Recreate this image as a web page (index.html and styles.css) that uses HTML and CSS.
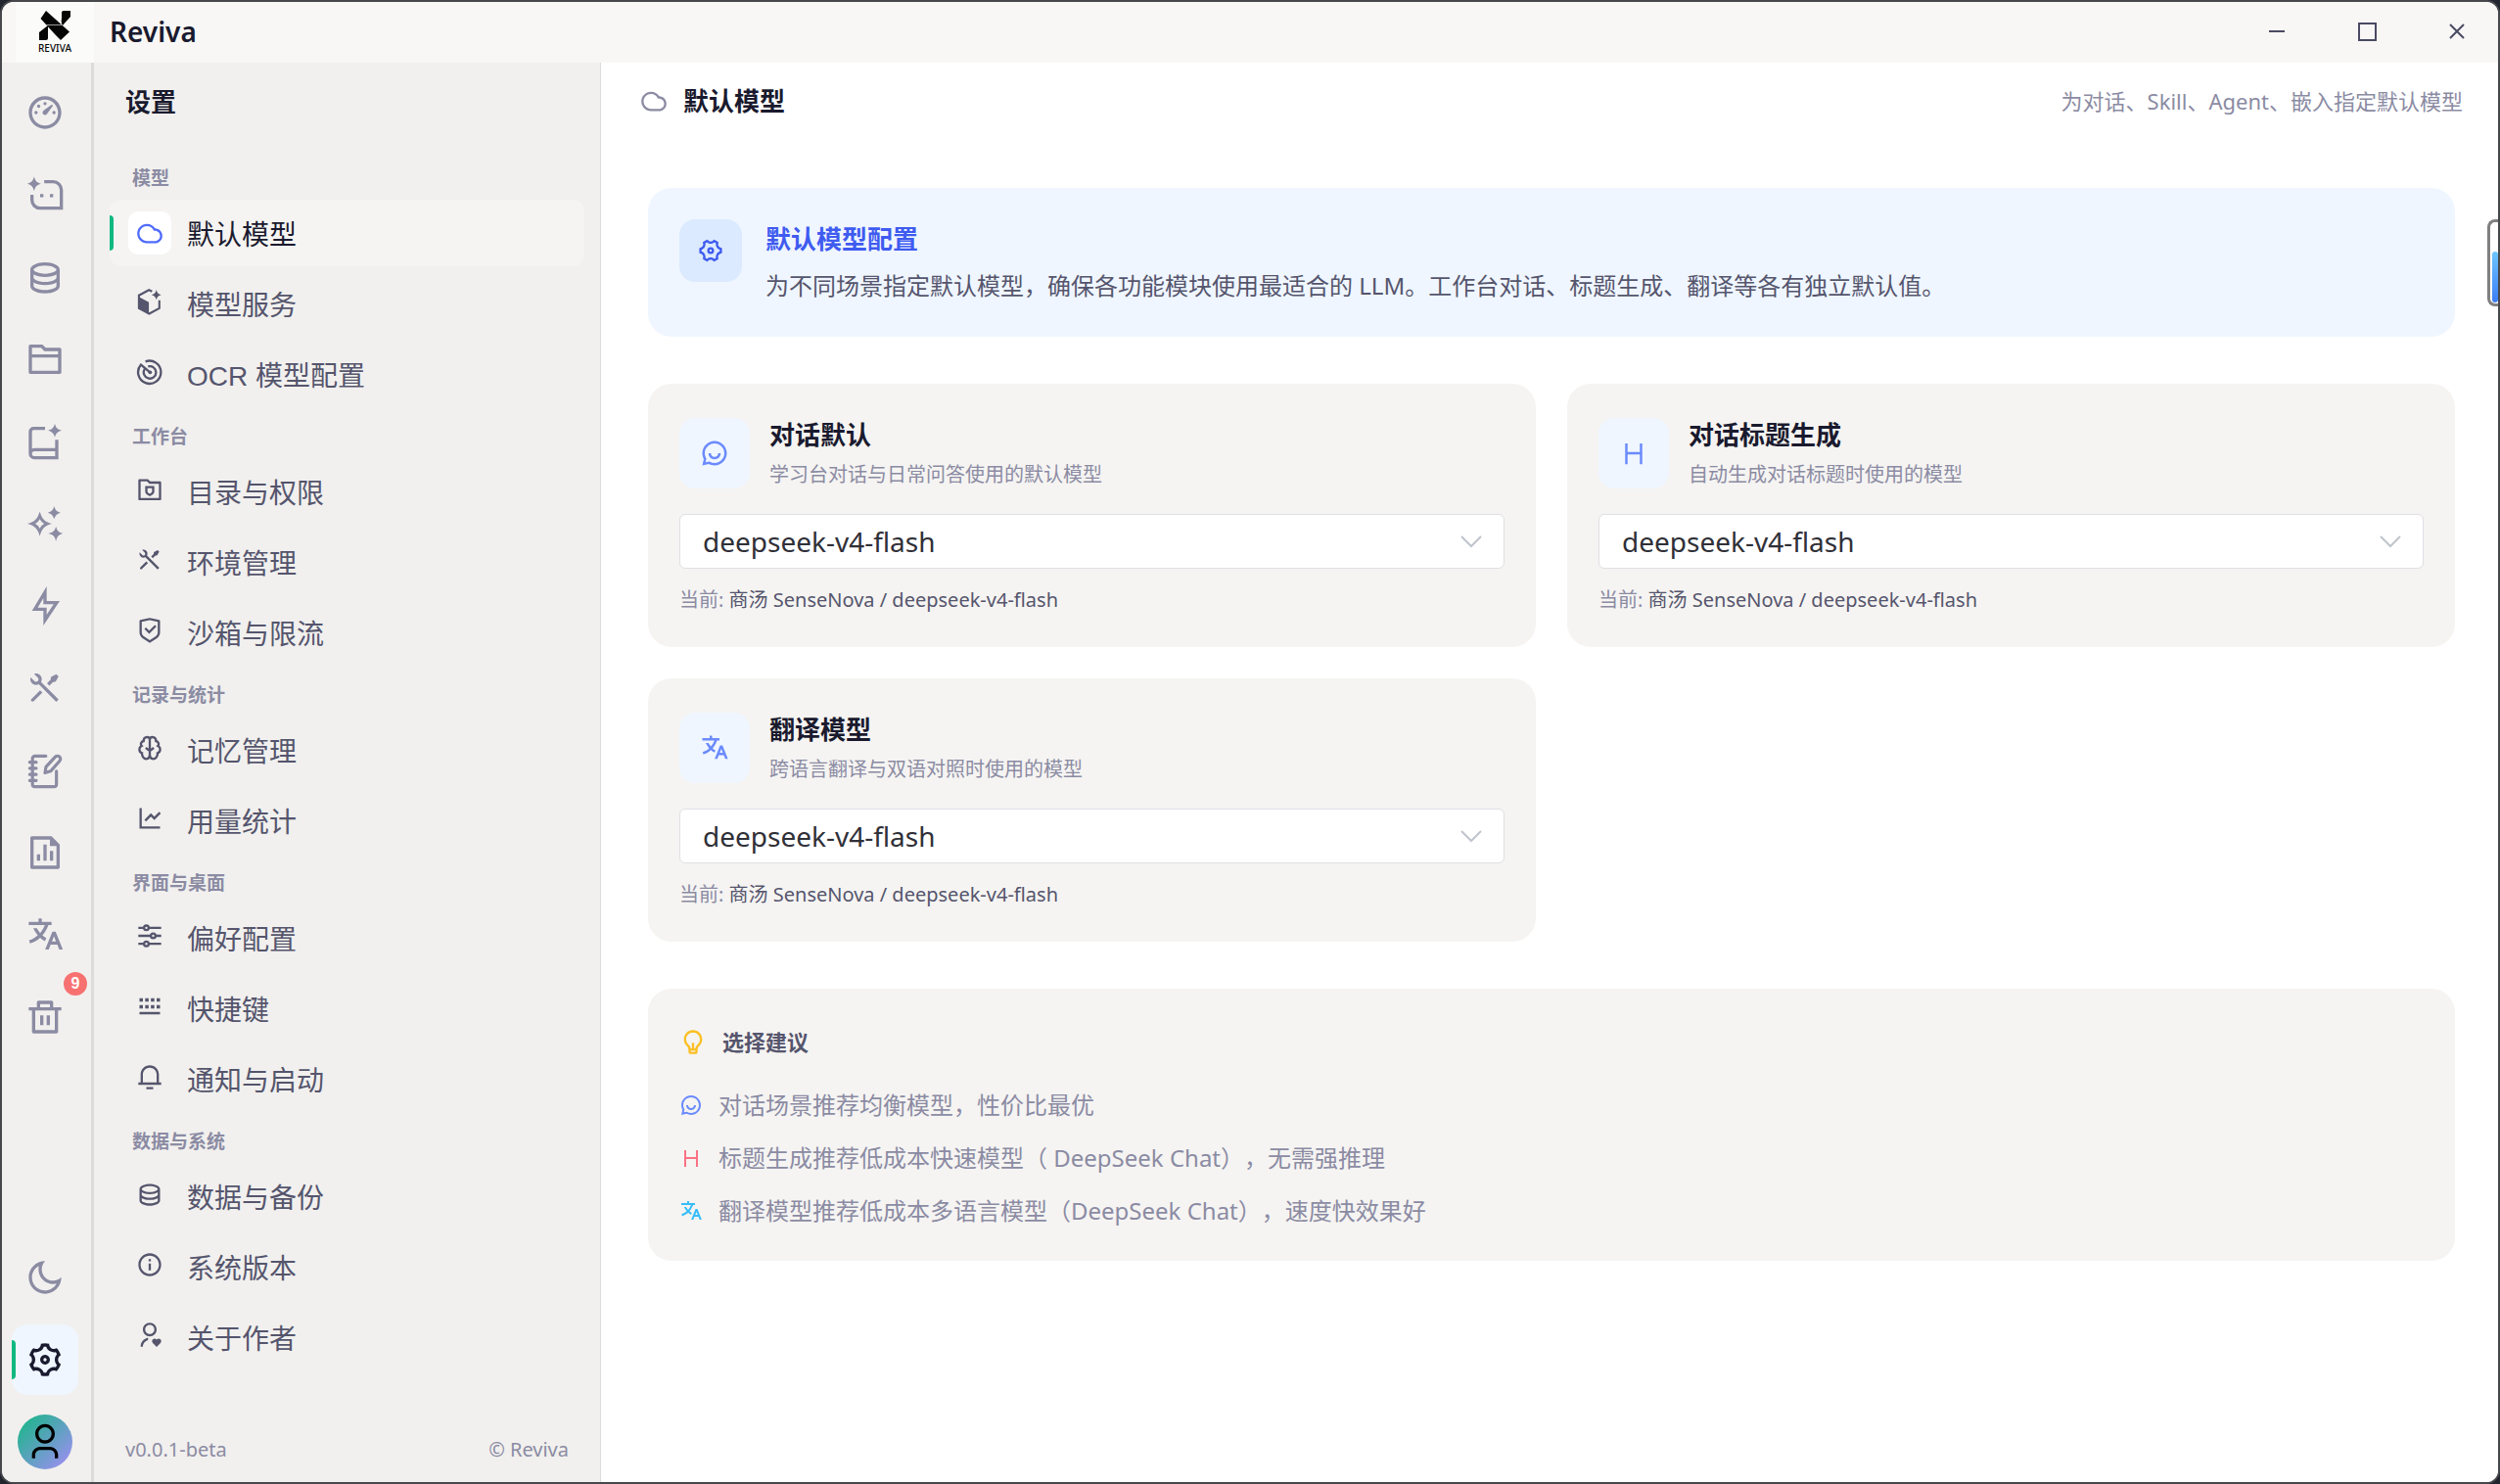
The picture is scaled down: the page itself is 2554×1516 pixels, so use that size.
FILE: index.html
```html
<!DOCTYPE html>
<html lang="zh-CN">
<head>
<meta charset="utf-8">
<meta name="viewport" content="width=device-width, initial-scale=1">
<title>Reviva</title>
<link rel="stylesheet" href="styles.css">
</head>
<body>
<svg class="sprite" aria-hidden="true">
  <symbol id="i-cloud" viewBox="0 0 24 24"><path d="M9.5 6C5.91 6 3 8.91 3 12.5C3 16.09 5.91 19 9.5 19H16.5C18.985 19 21 16.985 21 14.5C21 12.015 18.985 10 16.5 10C16.172 10 15.852 10.035 15.543 10.102C14.589 7.699 12.243 6 9.5 6ZM16.5 21H9.5C4.806 21 1 17.194 1 12.5C1 7.806 4.806 4 9.5 4C12.543 4 15.213 5.599 16.715 8.003C20.205 8.117 23 10.982 23 14.5C23 18.09 20.09 21 16.5 21Z"/></symbol>
  <symbol id="i-dash" viewBox="0 0 24 24"><path d="M12 2C17.523 2 22 6.477 22 12C22 17.523 17.523 22 12 22C6.477 22 2 17.523 2 12C2 6.477 6.477 2 12 2ZM12 4C7.582 4 4 7.582 4 12C4 16.418 7.582 20 12 20C16.418 20 20 16.418 20 12C20 7.582 16.418 4 12 4ZM15.833 7.337C16.07 7.171 16.392 7.199 16.596 7.404C16.8 7.608 16.827 7.93 16.659 8.164C14.479 11.21 13.28 12.842 13.061 13.061C12.475 13.646 11.525 13.646 10.939 13.061C10.354 12.475 10.354 11.525 10.939 10.939C11.313 10.566 12.944 9.365 15.833 7.337Z"/><circle cx="17.5" cy="12" r="1"/><circle cx="6.5" cy="12" r="1"/><circle cx="8.1" cy="8.1" r="1"/><circle cx="12" cy="6.5" r="1"/></symbol>
  <symbol id="i-chatai" viewBox="0 0 24 24"><path d="M11.5 4H17a5 5 0 0 1 5 5V20.2H9a5 5 0 0 1-5-5V12" fill="none" stroke="currentColor" stroke-width="2"/><path d="M5.3 .8C5.9 3.400 6.900 4.600 9.500 5.200C6.900 5.900 5.900 7 5.300 9.800C4.700 7 3.700 5.900 1.100 5.200C3.700 4.600 4.700 3.400 5.300 .8ZM9 11.500h2v2H9zM15 11.500h2v2h-2z"/></symbol>
  <symbol id="i-db" viewBox="0 0 24 24"><path d="M5 12.5C5 12.813 5.461 13.358 6.53 13.893C7.914 14.585 9.877 15 12 15C14.123 15 16.086 14.585 17.47 13.893C18.539 13.358 19 12.813 19 12.5V10.329C17.35 11.348 14.827 12 12 12C9.173 12 6.65 11.348 5 10.329V12.5ZM19 15.329C17.35 16.348 14.827 17 12 17C9.173 17 6.65 16.348 5 15.329V17.5C5 17.813 5.461 18.358 6.53 18.893C7.914 19.585 9.877 20 12 20C14.123 20 16.086 19.585 17.47 18.893C18.539 18.358 19 17.813 19 17.5V15.329ZM3 17.5V7.5C3 5.015 7.029 3 12 3C16.971 3 21 5.015 21 7.5V17.5C21 19.985 16.971 22 12 22C7.029 22 3 19.985 3 17.5ZM12 10C14.123 10 16.086 9.585 17.47 8.893C18.539 8.358 19 7.813 19 7.5C19 7.187 18.539 6.642 17.47 6.107C16.086 5.415 14.123 5 12 5C9.877 5 7.914 5.415 6.53 6.107C5.461 6.642 5 7.187 5 7.5C5 7.813 5.461 8.358 6.53 8.893C7.914 9.585 9.877 10 12 10Z"/></symbol>
  <symbol id="i-folder" viewBox="0 0 24 24"><path d="M12.414 5H21C21.552 5 22 5.448 22 6V20C22 20.552 21.552 21 21 21H3C2.448 21 2 20.552 2 20V4C2 3.448 2.448 3 3 3H10.414L12.414 5ZM20 11H4V19H20V11ZM20 9V7H11.586L9.586 5H4V9H20Z"/></symbol>
  <symbol id="i-book" viewBox="0 0 24 24"><path d="M12 4H5a2 2 0 0 0-2 2V19.500M19.200 11V22H5.500a2.400 2.400 0 0 1 0-5H19.200" fill="none" stroke="currentColor" stroke-width="2"/><path d="M18 1C18.600 3.500 19.700 4.600 22.200 5.200C19.700 5.900 18.600 7 18 9.400C17.400 7 16.300 5.900 13.800 5.200C16.300 4.600 17.400 3.500 18 1Z"/></symbol>
  <symbol id="i-sparkle" viewBox="0 0 24 24"><path fill-rule="evenodd" d="M8.800 4.500C10 9 11.700 10.800 16.200 12C11.700 13.300 10 15.100 8.800 19.600C7.500 15.100 5.700 13.300 1.200 12C5.700 10.800 7.500 9 8.800 4.500ZM8.800 9.200C8 10.700 7.300 11.300 6 12C7.300 12.800 8 13.500 8.800 15C9.500 13.500 10.200 12.800 11.500 12C10.200 11.300 9.500 10.700 8.800 9.200ZM17.600 1.200C18.200 3.600 19.300 4.700 21.500 5.200C19.300 5.800 18.200 6.900 17.600 9.200C17 6.900 15.900 5.800 13.700 5.200C15.900 4.700 17 3.600 17.600 1.200ZM18.700 13.600C19.300 16.200 20.400 17.300 23 18C20.400 18.700 19.300 19.800 18.700 22.800C18.100 19.800 17 18.700 14 18C17 17.300 18.100 16.200 18.700 13.600Z"/></symbol>
  <symbol id="i-bolt" viewBox="0 0 24 24"><path d="M13 9H21L11 24V15H4L13 0V9ZM11 11V7.221L7.532 13H13V17.394L17.263 11H11Z"/></symbol>
  <symbol id="i-tools" viewBox="0 0 24 24"><path d="M5.329 3.272C6.563 2.833 7.992 3.107 8.979 4.094C10.1 5.215 10.302 6.907 9.584 8.234L20.293 18.944L18.879 20.358L8.17 9.649C6.843 10.367 5.151 10.165 4.03 9.044C3.042 8.057 2.768 6.627 3.207 5.393L5.444 7.63C6.03 8.216 6.979 8.216 7.565 7.63C8.151 7.044 8.151 6.094 7.565 5.509L5.329 3.272ZM15.697 5.155L18.879 3.387L20.293 4.802L18.525 7.984L16.757 8.337L14.636 10.458L13.222 9.044L15.343 6.923L15.697 5.155ZM8.979 13.287L10.394 14.701L5.09 20.004C4.7 20.395 4.066 20.395 3.676 20.004C3.313 19.642 3.287 19.07 3.598 18.677L8.979 13.287Z"/></symbol>
  <symbol id="i-note" viewBox="0 0 24 24"><path d="M12.500 3.200H5.800a1.500 1.500 0 0 0-1.500 1.500V20.500a1.500 1.500 0 0 0 1.500 1.500H17.500a1.500 1.500 0 0 0 1.500-1.500V12.500M2.600 7H6.600M2.600 10.700H6.600M2.600 14.500H6.600M2.600 18.200H6.600M12 13.500L12.600 9.800L18.300 3.700A1.700 1.700 0 0 1 20.900 6.300L15.400 12.500Z" fill="none" stroke="currentColor" stroke-width="1.900" stroke-linecap="round" stroke-linejoin="round"/></symbol>
  <symbol id="i-filechart" viewBox="0 0 24 24"><path d="M11 7H13V17H11V7ZM15 11H17V17H15V11ZM7 13H9V17H7V13ZM15 4H5V20H19V8H15V4ZM3 2.992C3 2.444 3.447 2 3.999 2H16L21 7L21 20.993C21 21.549 20.555 22 20.007 22H3.993C3.445 22 3 21.545 3 21.008V2.992Z"/></symbol>
  <symbol id="i-translate" viewBox="0 0 24 24"><path d="M18.5 10L22.9 21H20.745L19.544 18H15.454L14.255 21H12.101L16.5 10H18.5ZM10 2V4H16V6L14.032 6.001C13.243 8.366 11.999 10.506 10.412 12.301C11.134 12.946 11.917 13.518 12.748 14.008L11.997 15.886C10.924 15.278 9.919 14.552 9 13.725C7.214 15.332 5.109 16.555 2.799 17.273L2.263 15.344C4.239 14.72 6.045 13.674 7.59 12.302C6.463 11.016 5.509 9.58 4.767 8L7.007 8C7.57 9.039 8.24 10.003 9 10.877C10.228 9.465 11.221 7.816 11.91 6.001L2 6V4H8V2H10ZM17.5 12.885L16.253 16H18.745L17.5 12.885Z"/></symbol>
  <symbol id="i-trash" viewBox="0 0 24 24"><path d="M17 6H22V8H20V21C20 21.552 19.552 22 19 22H5C4.448 22 4 21.552 4 21V8H2V6H7V3C7 2.448 7.448 2 8 2H16C16.552 2 17 2.448 17 3V6ZM18 8H6V20H18V8ZM9 11H11V17H9V11ZM13 11H15V17H13V11ZM9 4V6H15V4H9Z"/></symbol>
  <symbol id="i-moon" viewBox="0 0 24 24"><path d="M10 7C10 10.866 13.134 14 17 14C18.958 14 20.729 13.196 22 11.9C22 11.933 22 11.967 22 12C22 17.523 17.523 22 12 22C6.477 22 2 17.523 2 12C2 6.477 6.477 2 12 2C12.034 2 12.067 2 12.101 2C10.804 3.271 10 5.042 10 7ZM4 12C4 16.418 7.582 20 12 20C15.058 20 17.716 18.284 19.062 15.762C18.395 15.919 17.704 16 17 16C12.029 16 8 11.971 8 7C8 6.296 8.081 5.605 8.238 4.938C5.716 6.284 4 8.942 4 12Z"/></symbol>
  <symbol id="i-gear" viewBox="0 0 24 24"><path fill-rule="evenodd" d="M2 12C2 11.135 2.11 10.296 2.316 9.496C3.406 9.553 4.488 9.01 5.072 8C5.655 6.99 5.584 5.783 4.991 4.867C6.184 3.695 7.668 2.82 9.326 2.361C9.822 3.334 10.833 4 12 4C13.167 4 14.178 3.334 14.674 2.361C16.332 2.82 17.817 3.695 19.009 4.867C18.416 5.783 18.345 6.99 18.928 8C19.512 9.01 20.594 9.553 21.684 9.496C21.89 10.296 22 11.135 22 12C22 12.864 21.89 13.703 21.684 14.503C20.594 14.447 19.512 14.99 18.928 16C18.345 17.009 18.416 18.217 19.009 19.133C17.817 20.304 16.332 21.179 14.674 21.638C14.178 20.666 13.167 20 12 20C10.833 20 9.822 20.666 9.326 21.638C7.668 21.179 6.184 20.304 4.991 19.133C5.584 18.217 5.655 17.009 5.072 16C4.488 14.99 3.406 14.447 2.316 14.503C2.11 13.703 2 12.864 2 12ZM6.804 15C7.434 16.091 7.615 17.346 7.368 18.524C7.776 18.814 8.21 19.065 8.665 19.274C9.562 18.471 10.739 18 12 18C13.261 18 14.438 18.471 15.335 19.274C15.79 19.065 16.224 18.814 16.632 18.524C16.385 17.346 16.566 16.091 17.196 15C17.826 13.909 18.823 13.125 19.966 12.749C19.988 12.502 20 12.252 20 12C20 11.748 19.988 11.498 19.966 11.25C18.823 10.875 17.826 10.091 17.196 9C16.566 7.908 16.385 6.654 16.632 5.476C16.224 5.186 15.79 4.935 15.335 4.726C14.438 5.528 13.261 6 12 6C10.739 6 9.562 5.528 8.665 4.726C8.21 4.935 7.776 5.186 7.368 5.476C7.615 6.654 7.434 7.908 6.804 9C6.174 10.091 5.177 10.875 4.034 11.25C4.012 11.498 4 11.748 4 12C4 12.252 4.012 12.502 4.034 12.749C5.177 13.125 6.174 13.909 6.804 15ZM12 15A3 3 0 1 1 12 9A3 3 0 0 1 12 15ZM12 13A1 1 0 1 0 12 11A1 1 0 0 0 12 13Z"/></symbol>
  <symbol id="i-user" viewBox="0 0 24 24"><path d="M20 22H18V20C18 18.343 16.657 17 15 17H9C7.343 17 6 18.343 6 20V22H4V20C4 17.239 6.239 15 9 15H15C17.761 15 20 17.239 20 20V22ZM12 13C8.686 13 6 10.314 6 7C6 3.686 8.686 1 12 1C15.314 1 18 3.686 18 7C18 10.314 15.314 13 12 13ZM12 11C14.209 11 16 9.209 16 7C16 4.791 14.209 3 12 3C9.791 3 8 4.791 8 7C8 9.209 9.791 11 12 11Z"/></symbol>
  <symbol id="i-box" viewBox="0 0 24 24"><path d="M14 3.200L11.300 1.900L2.500 6.600V17.900L11.500 22.700L20.400 17.900V11" fill="none" stroke="currentColor" stroke-width="1.800"/><path d="M1.700 7.600L11.200 12.700V22.600L1.700 18ZM17.800 1.800C18.300 4.500 19.400 5.600 22 6.200C19.400 6.900 18.300 8 17.800 10.600C17.200 8 16.100 6.900 13.500 6.200C16.100 5.600 17.200 4.500 17.800 1.800Z"/></symbol>
  <symbol id="i-radar" viewBox="0 0 24 24"><path d="M8.200 2.900A10 10 0 1 1 4.300 5.600L12.500 12.500M10.500 7.200A5.400 5.400 0 1 1 7.500 9.500" fill="none" stroke="currentColor" stroke-width="2"/><circle cx="12.300" cy="12.300" r="1.600"/></symbol>
  <symbol id="i-foldershield" viewBox="0 0 24 24"><path d="M12.414 5H21C21.552 5 22 5.448 22 6V20.500C22 21 21.552 21.500 21 21.500H3C2.448 21.500 2 21 2 20.500V4C2 3.448 2.448 3 3 3H10.414L12.414 5ZM4 5V19.500H20V7H11.586L9.586 5H4ZM8 9H16V14C16 15.600 14.800 16.800 12 18C9.200 16.800 8 15.600 8 14V9ZM10 11V14C10 14.600 10.700 15.200 12 15.900C13.300 15.200 14 14.600 14 14V11H10Z"/></symbol>
  <symbol id="i-shield" viewBox="0 0 24 24"><path d="M12 1L20.217 2.826C20.674 2.928 21 3.333 21 3.802V13.789C21 15.795 19.997 17.669 18.328 18.781L12 23L5.672 18.781C4.003 17.669 3 15.795 3 13.789V3.802C3 3.333 3.326 2.928 3.783 2.826L12 1ZM12 3.049L5 4.604V13.789C5 15.127 5.668 16.375 6.781 17.117L12 20.597L17.219 17.117C18.332 16.375 19 15.127 19 13.789V4.604L12 3.049ZM16.452 7.222L17.866 8.636L11.502 15L7.26 10.757L8.674 9.343L11.502 12.171L16.452 7.222Z"/></symbol>
  <symbol id="i-brain" viewBox="0 0 24 24"><path d="M12 4.500C11.300 1.700 6.500 1.900 6.600 6C4.300 6.400 3.600 9 4.900 10.300C2.300 11.500 2.100 15.500 5.200 16.600C4.900 19.500 7 22.200 9.600 21.600C11.200 21.200 12 19.500 12 18V4.500C12.700 1.700 17.500 1.900 17.400 6C19.700 6.400 20.400 9 19.100 10.300C21.700 11.500 21.900 15.500 18.800 16.600C19.100 19.500 17 22.200 14.400 21.600C12.800 21.200 12 19.500 12 18M8.500 12L12 14.700L15.500 12" fill="none" stroke="currentColor" stroke-width="2"/></symbol>
  <symbol id="i-line" viewBox="0 0 24 24"><path d="M5 3V19H21V21H3V3H5ZM20.293 6.293L21.707 7.707L16 13.414L13 10.415L8.707 14.707L7.293 13.293L13 7.586L16 10.585L20.293 6.293Z"/></symbol>
  <symbol id="i-eq" viewBox="0 0 24 24"><path d="M2 5H7M11 5H22M2 12H13M17 12H22M2 19H7M11 19H22" fill="none" stroke="currentColor" stroke-width="2"/><g fill="none" stroke="currentColor" stroke-width="2"><circle cx="9" cy="5" r="2"/><circle cx="15" cy="12" r="2"/><circle cx="9" cy="19" r="2"/></g></symbol>
  <symbol id="i-keys" viewBox="0 0 24 24"><path d="M3 17H21V19H3V17ZM3 11H6V14H3V11ZM8 11H11V14H8V11ZM3 5H6V8H3V5ZM13 5H16V8H13V5ZM18 5H21V8H18V5ZM13 11H16V14H13V11ZM18 11H21V14H18V11ZM8 5H11V8H8V5Z"/></symbol>
  <symbol id="i-bell" viewBox="0 0 24 24"><path d="M20 17H22V19H2V17H4V10C4 5.582 7.582 2 12 2C16.418 2 20 5.582 20 10V17ZM18 17V10C18 6.686 15.314 4 12 4C8.686 4 6 6.686 6 10V17H18ZM9 21H15V23H9V21Z"/></symbol>
  <symbol id="i-info" viewBox="0 0 24 24"><path d="M12 22C6.477 22 2 17.523 2 12C2 6.477 6.477 2 12 2C17.523 2 22 6.477 22 12C22 17.523 17.523 22 12 22ZM12 20C16.418 20 20 16.418 20 12C20 7.582 16.418 4 12 4C7.582 4 4 7.582 4 12C4 16.418 7.582 20 12 20ZM11 7H13V9H11V7ZM11 11H13V17H11V11Z"/></symbol>
  <symbol id="i-userheart" viewBox="0 0 24 24"><path d="M17.841 15.659L18.017 15.836L18.195 15.659C19.073 14.780 20.498 14.780 21.377 15.659C22.255 16.538 22.255 17.962 21.377 18.841L18.018 22.200L14.659 18.841C13.780 17.962 13.780 16.538 14.659 15.659C15.538 14.780 16.962 14.780 17.841 15.659ZM10.500 14.200V16.200C7.900 16.900 6 19.200 6 22H4C4 18.100 6.800 14.900 10.500 14.200ZM12 1C15.315 1 18 3.685 18 7C18 10.315 15.315 13 12 13C8.685 13 6 10.315 6 7C6 3.685 8.685 1 12 1ZM12 3C9.790 3 8 4.790 8 7C8 9.210 9.790 11 12 11C14.210 11 16 9.210 16 7C16 4.790 14.210 3 12 3Z"/></symbol>
  <symbol id="i-chat" viewBox="0 0 24 24"><path d="M7.291 20.824L2 22L3.176 16.709C2.425 15.306 2 13.703 2 12C2 6.477 6.477 2 12 2C17.523 2 22 6.477 22 12C22 17.523 17.523 22 12 22C10.298 22 8.694 21.575 7.291 20.824ZM7.581 18.711L8.234 19.061C9.382 19.675 10.666 20 12 20C16.418 20 20 16.418 20 12C20 7.582 16.418 4 12 4C7.582 4 4 7.582 4 12C4 13.335 4.325 14.618 4.939 15.766L5.289 16.419L4.634 19.366L7.581 18.711ZM7 12H9C9 13.657 10.343 15 12 15C13.657 15 15 13.657 15 12H17C17 14.761 14.761 17 12 17C9.239 17 7 14.761 7 12Z"/></symbol>
  <symbol id="i-h" viewBox="0 0 24 24"><path d="M17 11V4H19V21H17V13H7V21H5V4H7V11H17Z"/></symbol>
  <symbol id="i-bulb" viewBox="0 0 24 24"><path d="M9.973 18H11V13H13V18H14.027C14.159 16.798 14.772 15.807 15.768 14.723C15.88 14.601 16.599 13.856 16.684 13.75C17.532 12.693 18 11.385 18 10C18 6.686 15.314 4 12 4C8.686 4 6 6.686 6 10C6 11.384 6.468 12.692 7.315 13.748C7.4 13.855 8.121 14.601 8.232 14.722C9.228 15.806 9.841 16.798 9.973 18ZM10 20V21H14V20H10ZM5.754 14.999C4.656 13.63 4 11.892 4 10C4 5.582 7.582 2 12 2C16.418 2 20 5.582 20 10C20 11.893 19.343 13.632 18.244 15.001C17.624 15.775 16 17 16 19V21C16 22.105 15.105 23 14 23H10C8.895 23 8 22.105 8 21V19C8 17 6.375 15.774 5.754 14.999Z"/></symbol>
  <symbol id="i-down" viewBox="0 0 24 24"><path d="M2 7L12 17L22 7" fill="none" stroke="currentColor" stroke-width="2"/></symbol>
</svg>

<div class="window">
  <span class="edge-mark" aria-hidden="true"></span>
  <header class="titlebar">
    <div class="logo">
      <svg viewBox="0 0 80 62" role="img" aria-label="Reviva">
        <path d="M31 9L55 30.500L46 39L41 34L25.500 17Z"/>
        <path d="M47 10.500Q47 9 49 9H56V15L47.500 24.500Q46 20 47 16Z"/>
        <path d="M33 24V37Q33 39 31 39H24V31Z"/>
        <path d="M31 23.500H48" stroke="#9a9a98" stroke-width="1"/>
        <text x="40" y="51" text-anchor="middle">REVIVA</text>
      </svg>
    </div>
    <h1 class="app-name">Reviva</h1>
    <div class="win-controls">
      <button type="button" aria-label="最小化"><svg viewBox="0 0 28 28"><path d="M6 14H22"/></svg></button>
      <button type="button" aria-label="最大化"><svg viewBox="0 0 28 28"><path d="M6 6H23V23H6Z"/></svg></button>
      <button type="button" aria-label="关闭"><svg viewBox="0 0 28 28"><path d="M7 7L21 21M21 7L7 21"/></svg></button>
    </div>
  </header>

  <div class="workspace">
    <aside class="rail">
      <nav class="rail-list" aria-label="主导航">
        <button type="button" class="rail-btn" aria-label="仪表盘"><svg><use href="#i-dash"/></svg></button>
        <button type="button" class="rail-btn" aria-label="对话"><svg><use href="#i-chatai"/></svg></button>
        <button type="button" class="rail-btn" aria-label="数据"><svg><use href="#i-db"/></svg></button>
        <button type="button" class="rail-btn" aria-label="文件"><svg><use href="#i-folder"/></svg></button>
        <button type="button" class="rail-btn" aria-label="学习"><svg><use href="#i-book"/></svg></button>
        <button type="button" class="rail-btn" aria-label="灵感"><svg><use href="#i-sparkle"/></svg></button>
        <button type="button" class="rail-btn" aria-label="快捷"><svg><use href="#i-bolt"/></svg></button>
        <button type="button" class="rail-btn" aria-label="工具"><svg><use href="#i-tools"/></svg></button>
        <button type="button" class="rail-btn" aria-label="笔记"><svg><use href="#i-note"/></svg></button>
        <button type="button" class="rail-btn" aria-label="报告"><svg><use href="#i-filechart"/></svg></button>
        <button type="button" class="rail-btn" aria-label="翻译"><svg><use href="#i-translate"/></svg></button>
        <button type="button" class="rail-btn" aria-label="回收站"><svg><use href="#i-trash"/></svg><span class="badge">9</span></button>
      </nav>
      <div class="rail-list rail-bottom">
        <button type="button" class="rail-btn" aria-label="深色模式"><svg><use href="#i-moon"/></svg></button>
        <button type="button" class="rail-btn is-active" aria-label="设置"><svg><use href="#i-gear" transform="rotate(30 20 20)"/></svg></button>
        <button type="button" class="avatar" aria-label="账户"><svg><use href="#i-user"/></svg></button>
      </div>
    </aside>

    <aside class="sidebar">
      <h2 class="sidebar-title">设置</h2>
      <nav class="menu" aria-label="设置">
        <h3>模型</h3>
        <button type="button" class="menu-item is-active"><span class="menu-icon"><svg><use href="#i-cloud"/></svg></span>默认模型</button>
        <button type="button" class="menu-item"><span class="menu-icon"><svg><use href="#i-box"/></svg></span>模型服务</button>
        <button type="button" class="menu-item"><span class="menu-icon"><svg><use href="#i-radar"/></svg></span>OCR 模型配置</button>
        <h3>工作台</h3>
        <button type="button" class="menu-item"><span class="menu-icon"><svg><use href="#i-foldershield"/></svg></span>目录与权限</button>
        <button type="button" class="menu-item"><span class="menu-icon"><svg><use href="#i-tools"/></svg></span>环境管理</button>
        <button type="button" class="menu-item"><span class="menu-icon"><svg><use href="#i-shield"/></svg></span>沙箱与限流</button>
        <h3>记录与统计</h3>
        <button type="button" class="menu-item"><span class="menu-icon"><svg><use href="#i-brain"/></svg></span>记忆管理</button>
        <button type="button" class="menu-item"><span class="menu-icon"><svg><use href="#i-line"/></svg></span>用量统计</button>
        <h3>界面与桌面</h3>
        <button type="button" class="menu-item"><span class="menu-icon"><svg><use href="#i-eq"/></svg></span>偏好配置</button>
        <button type="button" class="menu-item"><span class="menu-icon"><svg><use href="#i-keys"/></svg></span>快捷键</button>
        <button type="button" class="menu-item"><span class="menu-icon"><svg><use href="#i-bell"/></svg></span>通知与启动</button>
        <h3>数据与系统</h3>
        <button type="button" class="menu-item"><span class="menu-icon"><svg><use href="#i-db"/></svg></span>数据与备份</button>
        <button type="button" class="menu-item"><span class="menu-icon"><svg><use href="#i-info"/></svg></span>系统版本</button>
        <button type="button" class="menu-item"><span class="menu-icon"><svg><use href="#i-userheart"/></svg></span>关于作者</button>
      </nav>
      <footer class="sidebar-foot"><span>v0.0.1-beta</span><span>© Reviva</span></footer>
    </aside>

    <main class="main">
      <header class="page-head">
        <svg><use href="#i-cloud"/></svg>
        <h2>默认模型</h2>
        <p>为对话、Skill、Agent、嵌入指定默认模型</p>
      </header>

      <div class="content">
        <section class="banner">
          <span class="banner-icon"><svg><use href="#i-gear"/></svg></span>
          <div>
            <h3>默认模型配置</h3>
            <p>为不同场景指定默认模型，确保各功能模块使用最适合的 LLM。工作台对话、标题生成、翻译等各有独立默认值。</p>
          </div>
        </section>

        <div class="cards">
          <section class="card">
            <div class="card-head">
              <span class="card-icon"><svg><use href="#i-chat"/></svg></span>
              <div>
                <h3><label for="m-chat">对话默认</label></h3>
                <p>学习台对话与日常问答使用的默认模型</p>
              </div>
            </div>
            <div class="select"><select id="m-chat"><option>deepseek-v4-flash</option></select><svg><use href="#i-down"/></svg></div>
            <p class="current">当前: <b>商汤 SenseNova / deepseek-v4-flash</b></p>
          </section>
          <section class="card">
            <div class="card-head">
              <span class="card-icon"><svg><use href="#i-h"/></svg></span>
              <div>
                <h3><label for="m-title">对话标题生成</label></h3>
                <p>自动生成对话标题时使用的模型</p>
              </div>
            </div>
            <div class="select"><select id="m-title"><option>deepseek-v4-flash</option></select><svg><use href="#i-down"/></svg></div>
            <p class="current">当前: <b>商汤 SenseNova / deepseek-v4-flash</b></p>
          </section>
          <section class="card">
            <div class="card-head">
              <span class="card-icon"><svg><use href="#i-translate"/></svg></span>
              <div>
                <h3><label for="m-trans">翻译模型</label></h3>
                <p>跨语言翻译与双语对照时使用的模型</p>
              </div>
            </div>
            <div class="select"><select id="m-trans"><option>deepseek-v4-flash</option></select><svg><use href="#i-down"/></svg></div>
            <p class="current">当前: <b>商汤 SenseNova / deepseek-v4-flash</b></p>
          </section>
        </div>

        <section class="tips">
          <h3><svg><use href="#i-bulb"/></svg>选择建议</h3>
          <ul>
            <li><svg class="c-indigo"><use href="#i-chat"/></svg>对话场景推荐均衡模型，性价比最优</li>
            <li><svg class="c-rose"><use href="#i-h"/></svg>标题生成推荐低成本快速模型（ DeepSeek Chat），无需强推理</li>
            <li><svg class="c-sky"><use href="#i-translate"/></svg>翻译模型推荐低成本多语言模型（DeepSeek Chat），速度快效果好</li>
          </ul>
        </section>
      </div>
    </main>
  </div>
  <span class="dock-widget" aria-hidden="true"><span></span></span>
</div>
</body>
</html>
```
FILE: styles.css
```css
:root {
  --ink: #1a1a2e;
  --text: #55556d;
  --muted: #8b8ba3;
  --panel: #f1f0ee;
  --card: #f5f4f2;
  --sky: #eff6ff;
  --indigo: #6b8afd;
  --ui: "Noto Sans", "Noto Sans CJK SC", sans-serif;
}

* { box-sizing: border-box; }

h1, h2, h3, p, ul { margin: 0; padding: 0; }

body {
  margin: 0;
  background: #22252e;
  font-family: var(--ui);
  color: var(--ink);
  text-spacing-trim: space-all;
}

button {
  border: 0;
  padding: 0;
  background: none;
  color: inherit;
  cursor: pointer;
}

svg { display: block; flex: none; fill: currentColor; }

.sprite { position: absolute; width: 0; height: 0; }

.window {
  position: relative;
  display: flex;
  flex-direction: column;
  min-height: 100vh;
  border: 2px solid #46484c;
  border-radius: 14px;
  background: #fff;
  overflow: hidden;
}

.edge-mark {
  position: absolute;
  left: -2px;
  top: 134px;
  width: 2px;
  height: 29px;
  background: #b5564a;
}

.titlebar {
  display: flex;
  align-items: center;
  height: 62px;
  padding-left: 14px;
  background: #f8f7f5;
}

.logo { width: 80px; height: 62px; background: #fbfbf9; }
.logo svg { width: 80px; height: 62px; fill: #050505; }
.logo text { font: 500 10px "Noto Sans", sans-serif; }

.app-name { margin-left: 16px; padding-bottom: 3px; font-size: 28px; font-weight: 600; line-height: 40px; }

.win-controls { display: flex; margin-left: auto; gap: 8px; color: #4a4a63; }
.win-controls button { display: grid; place-items: center; width: 84px; height: 62px; padding-bottom: 3px; }
.win-controls svg { width: 28px; height: 28px; fill: none; stroke: currentColor; stroke-width: 2; }

.workspace { display: flex; flex: 1; }

.rail {
  display: flex;
  flex-direction: column;
  justify-content: space-between;
  width: 94px;
  padding: 15px 0 13px 10px;
  border-right: 3px solid #dcdcdb;
  background: var(--panel);
}

.rail-list {
  display: flex;
  flex-direction: column;
  align-items: center;
  gap: 12px;
  width: 68px;
  color: var(--muted);
}

.rail-btn {
  position: relative;
  display: grid;
  place-items: center;
  width: 68px;
  height: 72px;
  border-radius: 16px;
}
.rail-btn svg, .avatar svg { width: 40px; height: 40px; }
.rail-btn.is-active { background: var(--sky); color: var(--ink); overflow: hidden; }
.rail-btn.is-active::before {
  content: "";
  position: absolute;
  left: 0;
  top: 16px;
  width: 4px;
  height: 40px;
  border-radius: 0 4px 4px 0;
  background: #10b981;
}

.badge {
  position: absolute;
  top: -10px;
  right: -9px;
  width: 24px;
  height: 24px;
  border-radius: 50%;
  background: #f87171;
  color: #fff;
  font: 700 16px/24px "Liberation Sans", sans-serif;
  text-align: center;
}

.avatar {
  display: grid;
  place-items: center;
  width: 56px;
  height: 56px;
  margin-top: 8px;
  border-radius: 50%;
  background: linear-gradient(135deg, #10b981, #a78bfa);
  color: #000;
}

.sidebar {
  display: flex;
  flex-direction: column;
  width: 518px;
  border-right: 1px solid #dcdcdb;
  background: var(--panel);
}
.sidebar-title { padding: 20px 32px; font-size: 26px; font-weight: 700; line-height: 40px; }

.menu { display: flex; flex-direction: column; padding: 8px 16px 0; }
.menu h3 {
  padding: 17px 23px 9px;
  color: var(--muted);
  font-size: 19px;
  font-weight: 700;
  line-height: 26px;
}
.menu-item {
  position: relative;
  display: flex;
  align-items: center;
  gap: 16px;
  height: 68px;
  padding: 6px 19px 0;
  border-radius: 12px;
  overflow: hidden;
  color: var(--text);
  font: 400 28px/40px "Liberation Sans", "Noto Sans CJK SC", sans-serif;
}
.menu-item + .menu-item { margin-top: 4px; }
.menu-icon {
  display: grid;
  place-items: center;
  width: 44px;
  height: 44px;
  margin-bottom: 6px;
  padding-bottom: 4px;
  border-radius: 10px;
}
.menu-icon svg { width: 28px; height: 28px; }
.menu-item.is-active { background: var(--card); color: var(--ink); }
.menu-item.is-active::before {
  content: "";
  position: absolute;
  left: 0;
  top: 16px;
  width: 4px;
  height: 36px;
  border-radius: 0 4px 4px 0;
  background: #10b981;
}
.menu-item.is-active .menu-icon { padding: 0; background: #fff; color: #4f6bfb; }

.sidebar-foot {
  display: flex;
  justify-content: space-between;
  margin-top: auto;
  padding: 18px 32px;
  color: var(--muted);
  font-size: 20px;
  line-height: 30px;
}

.main { flex: 1; min-width: 0; background: #fff; }

.page-head {
  display: flex;
  align-items: center;
  height: 80px;
  padding: 0 36px 2px 40px;
}
.page-head svg { width: 28px; height: 28px; color: var(--muted); }
.page-head h2 { margin-left: 16px; font-size: 26px; font-weight: 700; line-height: 40px; }
.page-head p { margin-left: auto; color: var(--muted); font-size: 22px; line-height: 40px; }

.content { display: flex; flex-direction: column; gap: 48px; padding: 48px 44px 48px 48px; }

.banner {
  display: flex;
  gap: 24px;
  padding: 32px;
  border-radius: 24px;
  background: var(--sky);
}
.banner-icon {
  display: grid;
  place-items: center;
  flex: none;
  width: 64px;
  height: 64px;
  border-radius: 16px;
  background: #dbeafe;
  color: #3f5bf0;
}
.banner-icon svg { width: 28px; height: 28px; }
.banner h3 { color: #3f5bf0; font-size: 26px; font-weight: 700; line-height: 40px; }
.banner p { margin-top: 8px; color: var(--text); font-size: 24px; line-height: 40px; }

.cards { display: grid; grid-template-columns: 1fr 1fr; gap: 32px; }
.card { padding: 32px; border-radius: 24px; background: var(--card); }
.card-head { display: flex; align-items: center; gap: 20px; margin-bottom: 24px; }
.card-icon {
  display: grid;
  place-items: center;
  flex: none;
  width: 72px;
  height: 72px;
  border-radius: 16px;
  background: var(--sky);
  color: var(--indigo);
}
.card-icon svg { width: 30px; height: 30px; }
.card h3 { font-size: 26px; font-weight: 700; line-height: 40px; }
.card-head p { margin-top: 5px; color: var(--muted); font-size: 20px; line-height: 32px; }

.select { display: grid; align-items: center; }
.select > * { grid-area: 1 / 1; }
.select select {
  width: 100%;
  height: 56px;
  padding: 0 64px 0 23px;
  border: 1px solid #dfdfe6;
  border-radius: 6px;
  appearance: none;
  background: #fff;
  color: #303038;
  font: 400 28px "Noto Sans", sans-serif;
}
.select svg {
  justify-self: end;
  width: 24px;
  height: 24px;
  margin-right: 22px;
  color: #c0c4cc;
  pointer-events: none;
}

.current { margin-top: 16px; color: var(--muted); font-size: 20px; line-height: 32px; }
.current b { color: var(--text); font-weight: 400; }

.tips { padding: 32px; border-radius: 24px; background: var(--card); }
.tips h3 {
  display: flex;
  align-items: center;
  gap: 16px;
  margin-bottom: 24px;
  color: var(--text);
  font-size: 22px;
  font-weight: 700;
  line-height: 44px;
}
.tips h3 svg { width: 28px; height: 28px; color: #fbbf24; }
.tips ul { display: flex; flex-direction: column; gap: 16px; list-style: none; }
.tips li {
  display: flex;
  align-items: center;
  gap: 16px;
  color: var(--muted);
  font-size: 24px;
  line-height: 38px;
}
.tips li svg { width: 24px; height: 24px; }
.c-indigo { color: var(--indigo); }
.c-rose { color: #fb7185; }
.c-sky { color: #38bdf8; }

.dock-widget {
  position: absolute;
  right: -2px;
  top: 222px;
  width: 13px;
  height: 89px;
  padding: 30px 0 1px 2px;
  border: 3px solid #808080;
  border-right: 2px solid #46484c;
  border-radius: 8px 0 0 8px;
  background: #fff;
}
.dock-widget span {
  display: block;
  height: 100%;
  border-radius: 3px;
  background: linear-gradient(#6ec6ff, #3b7df6);
}
```
